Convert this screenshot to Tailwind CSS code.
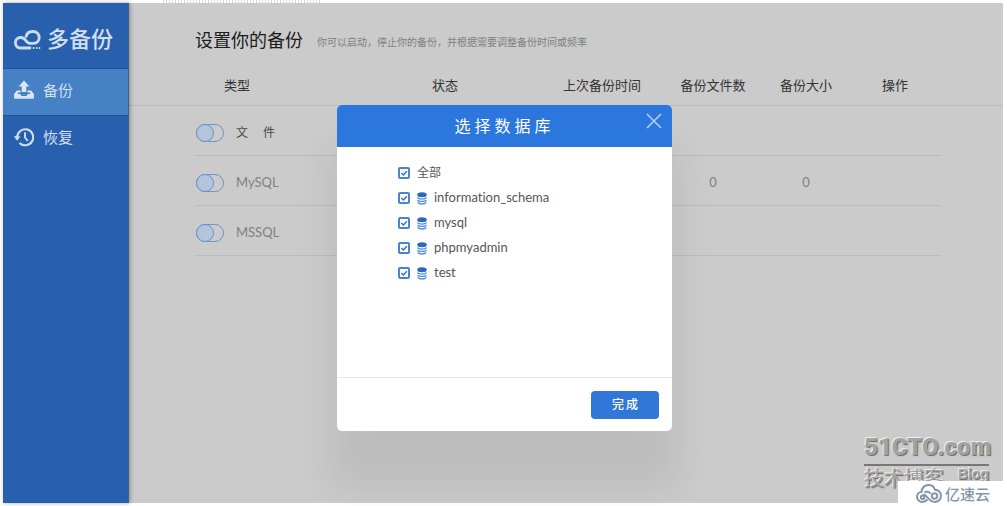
<!DOCTYPE html>
<html lang="zh-CN">
<head>
<meta charset="utf-8">
<meta name="viewport" content="width=device-width, initial-scale=1">
<title>多备份</title>
<script src="https://cdn.jsdelivr.net/npm/@tailwindcss/browser@4"></script>
</head>
<body class="bg-white font-[Lato,'Noto_Sans_CJK_SC',sans-serif] text-[13px] [font-variant-ligatures:none]">
<svg class="hidden" aria-hidden="true">
  <symbol id="db" viewBox="0 0 10 13">
    <ellipse cx="5" cy="2.8" rx="4.8" ry="2.500" fill="#2c68bf"/>
    <path d="M.5 5.600C1.500 7.500 8.500 7.500 9.500 5.600M.5 8C1.500 9.900 8.500 9.900 9.500 8M.8 10.400c1 1.900 7.400 1.900 8.400 0" fill="none" stroke="#5592e2" stroke-width="1.300"/>
    <path d="M2.500 12.600h5" stroke="#8fb8ee" stroke-width=".8"/>
  </symbol>
  <symbol id="tick" viewBox="0 0 12 12">
    <path d="M3.400 6l2 1.900L8.900 4.300" fill="none" stroke="#2f6dc4" stroke-width="1.400"/>
  </symbol>
</svg>

<div class="relative flex min-h-screen py-[3px] pr-1 pl-[3px]">
  <div class="absolute top-0 left-[163px] h-[3px] w-[158px] bg-[repeating-linear-gradient(90deg,#d6d6d6_0_1px,#fff_1px_3px)]"></div>

  <aside class="relative z-10 w-[126px] shrink-0 border-r border-[#3e5f93] bg-[#2860ae] text-[#d3dff0] shadow-[1px_0_4px_rgba(0,0,0,0.35)]">
    <div class="flex h-[65px] items-center gap-[6px] pt-2 pl-[11px]">
      <svg class="h-5 w-[27px]" viewBox="0 0 27 20" fill="none" stroke="#cfdcef" stroke-width="2.800" stroke-linecap="round">
        <path d="M16 18H6.500C3.300 18 1.400 15.600 1.400 12.800c0-3 2.200-5.300 5.100-5.300 2.700 0 4.200 1.400 5.300 3.100 1 1.500 2 2.700 4.200 2.700h3.600c3.200 0 5.600-2.400 5.600-5.700S22.600 1.500 19.300 1.500h-.8c-3.400 0-5.800 2-6.400 4.900"/>
        <path d="M19.500 18h.1M22.500 18h.1M25.400 18h.1" stroke-width="1.800"/>
      </svg>
      <span class="pb-[2px] text-[22px] leading-7 font-medium">多备份</span>
    </div>
    <nav class="text-[15px]">
      <a href="#backup" class="flex h-[48px] items-center gap-[9px] border-y border-[#1f5299] bg-[#4581c4] pb-1 pl-[11px]">
        <svg class="h-5 w-5" viewBox="0 0 20 20" fill="#dbe4f0">
          <path d="M10 .5l5.300 6h-3V12H7.700V6.500h-3z"/>
          <path d="M0 14.200 2.800 10.500h3.700v2H4.300L3.300 14h2.900l1.300 2h5l1.300-2h2.900l-1-1.500h-2.200v-2h3.700l2.800 3.700v3.600a1 1 0 0 1-1 1H1a1 1 0 0 1-1-1z"/>
        </svg>
        备份
      </a>
      <a href="#restore" class="flex h-[44px] items-center gap-[9px] pb-[2px] pl-[11px]">
        <svg class="h-5 w-5" viewBox="0 0 20 20" fill="none" stroke="#cfdcef" stroke-width="2.100">
          <path d="M3.200 10a8 8 0 1 1 2.300 5.900"/>
          <path d="M-.2 9.300h6.600L3.100 13.800z" fill="#cfdcef" stroke="none"/>
          <path d="M11 5.200v5.300l2.800 3.400" stroke-width="1.900"/>
        </svg>
        恢复
      </a>
    </nav>
  </aside>

  <main class="relative flex-1 overflow-hidden bg-[#cbcbcb]">
    <header class="flex h-[61px] items-center gap-[14px] pt-3 pl-[66px]">
      <h1 class="text-[18px] leading-6 text-[#1c1c1c]">设置你的备份</h1>
      <p class="pt-1 text-[10px] leading-4 text-[#808080]">你可以启动，停止你的备份，并根据需要调整备份时间或频率</p>
    </header>
    <table class="w-full table-fixed border-collapse text-center">
      <colgroup>
        <col class="w-[66px]"><col class="w-[154px]"><col class="w-[192px]"><col class="w-[122px]"><col class="w-[100px]"><col class="w-[86px]"><col class="w-[92px]"><col>
      </colgroup>
      <thead>
        <tr class="h-[41px] border-b border-[#bababa] text-[#333]">
          <td></td>
          <th scope="col" class="pt-[2px] pl-[29px] text-left font-normal">类型</th>
          <th scope="col" class="pt-[2px] font-normal">状态</th>
          <th scope="col" class="pt-[2px] font-normal">上次备份时间</th>
          <th scope="col" class="pt-[2px] font-normal">备份文件数</th>
          <th scope="col" class="pt-[2px] font-normal">备份大小</th>
          <th scope="col" class="pt-[2px] font-normal">操作</th>
          <td></td>
        </tr>
      </thead>
      <tbody class="text-[#808080]">
        <tr class="h-[50px]">
          <td></td>
          <td class="border-b border-[#bcbcbc]">
            <label class="flex items-center gap-3 pt-[6px] pl-px text-[#4a4a4a]">
              <input type="checkbox" role="switch" class="h-[18px] w-7 appearance-none rounded-full border border-[#6c94c6] before:-mt-px before:-ml-px before:block before:size-[18px] before:rounded-full before:border before:border-[#6c94c6] before:bg-[#b3c4dc]">
              <span class="text-xs whitespace-pre">文　 件</span>
            </label>
          </td>
          <td class="border-b border-[#bcbcbc]"></td><td class="border-b border-[#bcbcbc]"></td><td class="border-b border-[#bcbcbc]"></td><td class="border-b border-[#bcbcbc]"></td><td class="border-b border-[#bcbcbc]"></td><td></td>
        </tr>
        <tr class="h-[50px]">
          <td></td>
          <td class="border-b border-[#bcbcbc]">
            <label class="flex items-center gap-3 pt-[6px] pl-px">
              <input type="checkbox" role="switch" class="h-[18px] w-7 appearance-none rounded-full border border-[#6c94c6] before:-mt-px before:-ml-px before:block before:size-[18px] before:rounded-full before:border before:border-[#6c94c6] before:bg-[#b3c4dc]">
              MySQL
            </label>
          </td>
          <td class="border-b border-[#bcbcbc]"></td><td class="border-b border-[#bcbcbc]"></td><td class="border-b border-[#bcbcbc] pt-[6px]">0</td><td class="border-b border-[#bcbcbc] pt-[6px]">0</td><td class="border-b border-[#bcbcbc]"></td><td></td>
        </tr>
        <tr class="h-[50px]">
          <td></td>
          <td class="border-b border-[#bcbcbc]">
            <label class="flex items-center gap-3 pt-[6px] pl-px">
              <input type="checkbox" role="switch" class="h-[18px] w-7 appearance-none rounded-full border border-[#6c94c6] before:-mt-px before:-ml-px before:block before:size-[18px] before:rounded-full before:border before:border-[#6c94c6] before:bg-[#b3c4dc]">
              MSSQL
            </label>
          </td>
          <td class="border-b border-[#bcbcbc]"></td><td class="border-b border-[#bcbcbc]"></td><td class="border-b border-[#bcbcbc]"></td><td class="border-b border-[#bcbcbc]"></td><td class="border-b border-[#bcbcbc]"></td><td></td>
        </tr>
      </tbody>
    </table>
  </main>

  <!-- Blog watermark -->
  <div class="absolute right-[18px] bottom-[16px] w-[125px] text-[#a2a2a2] [text-shadow:-1px_-1px_0_#eeeeee,1px_1px_1px_#666]">
    <div class="border-b-2 border-[#777] text-center font-[Impact,Roboto,'Liberation_Sans',sans-serif] text-2xl leading-[34px] font-black">51CTO.com</div>
    <div class="flex items-start justify-between text-[20px] leading-6">
      <span>技术博客</span>
      <span class="font-['Liberation_Sans',sans-serif] text-sm leading-4 font-bold">Blog</span>
    </div>
  </div>
  <div class="absolute right-0 bottom-0 flex h-[25px] w-[109px] items-center gap-[3px] bg-white pl-[18px] text-[#8494ad]">
    <svg class="h-[19px] w-[26px]" viewBox="0 0 26 19" fill="none" stroke="#8494ad" stroke-width="2">
      <path d="M11.500 15.500C10 17.200 8.300 18 6.500 18 3.400 18 1 15.800 1 12.900 1 10.200 3 8.200 5.500 8 5.500 4 8.600 1 12.400 1c3.200 0 5.700 1.900 6.600 4.700 3.400.1 6 2.800 6 6.100 0 3.500-2.700 6.200-6.100 6.200-3.400 0-5.500-2.200-7.300-4.500C10.200 11.700 8.900 10.600 7 10.600"/>
      <circle cx="18.600" cy="12" r="2.700"/><circle cx="6.700" cy="13.200" r="1.800"/>
      <path d="M8.500 8.500c2-1.500 4.700-.9 6.200 1.300"/>
    </svg>
    <span class="text-[15px] leading-5 font-medium">亿速云</span>
  </div>

  <!-- Database picker -->
  <div class="absolute inset-0 z-20 flex items-start justify-center overflow-hidden pt-[105px] pl-[2px]">
    <section role="dialog" aria-labelledby="picker-title" class="flex min-h-[326px] w-[335px] flex-col rounded-[5px] bg-white text-[#555] shadow-[0_50px_36px_8px_rgba(0,0,0,0.07)]">
      <header class="relative flex h-[42px] items-center justify-center rounded-t-[5px] bg-[#2c77dd] text-white">
        <h2 id="picker-title" class="text-[16px] tracking-[4px]">选择数据库</h2>
        <button type="button" aria-label="关闭" class="absolute top-2 right-[10px]">
          <svg class="size-4" viewBox="0 0 16 16" stroke="#b9d3f6" stroke-width="1.500"><path d="M1 1l14 14M15 1 1 15"/></svg>
        </button>
      </header>
      <div class="flex-1 pt-[13px] pl-[61px]">
        <label class="flex h-[25px] items-center gap-[7px] text-xs">
          <span class="grid"><input type="checkbox" checked class="col-start-1 row-start-1 size-3 appearance-none rounded-[2px] border-2 border-[#4a83cf]"><svg class="col-start-1 row-start-1 size-3"><use href="#tick"/></svg></span>
          全部
        </label>
        <label class="flex h-[25px] items-center gap-[7px]">
          <span class="grid"><input type="checkbox" checked class="col-start-1 row-start-1 size-3 appearance-none rounded-[2px] border-2 border-[#4a83cf]"><svg class="col-start-1 row-start-1 size-3"><use href="#tick"/></svg></span>
          <svg class="mt-[2px] h-[13px] w-[10px]"><use href="#db"/></svg>
          information_schema
        </label>
        <label class="flex h-[25px] items-center gap-[7px]">
          <span class="grid"><input type="checkbox" checked class="col-start-1 row-start-1 size-3 appearance-none rounded-[2px] border-2 border-[#4a83cf]"><svg class="col-start-1 row-start-1 size-3"><use href="#tick"/></svg></span>
          <svg class="mt-[2px] h-[13px] w-[10px]"><use href="#db"/></svg>
          mysql
        </label>
        <label class="flex h-[25px] items-center gap-[7px]">
          <span class="grid"><input type="checkbox" checked class="col-start-1 row-start-1 size-3 appearance-none rounded-[2px] border-2 border-[#4a83cf]"><svg class="col-start-1 row-start-1 size-3"><use href="#tick"/></svg></span>
          <svg class="mt-[2px] h-[13px] w-[10px]"><use href="#db"/></svg>
          phpmyadmin
        </label>
        <label class="flex h-[25px] items-center gap-[7px]">
          <span class="grid"><input type="checkbox" checked class="col-start-1 row-start-1 size-3 appearance-none rounded-[2px] border-2 border-[#4a83cf]"><svg class="col-start-1 row-start-1 size-3"><use href="#tick"/></svg></span>
          <svg class="mt-[2px] h-[13px] w-[10px]"><use href="#db"/></svg>
          test
        </label>
      </div>
      <footer class="flex h-[54px] items-center justify-end border-t border-[#e6e6e6] pr-[13px]">
        <button type="button" class="h-7 w-[68px] rounded-[4px] bg-[#3077d8] pl-[2px] text-xs font-medium tracking-[2px] text-white">完成</button>
      </footer>
    </section>
  </div>
</div>
</body>
</html>
